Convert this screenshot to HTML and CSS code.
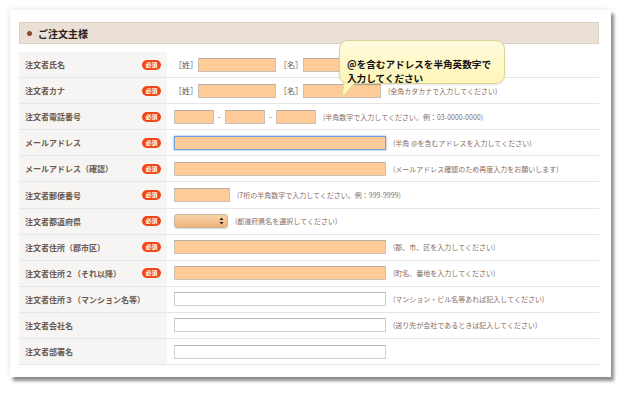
FILE: index.html
```html
<!DOCTYPE html>
<html lang="ja">
<head>
<meta charset="utf-8">
<link rel="stylesheet" href="styles.css">
</head>
<body>
<div class="window">
  <div class="section-head"><span class="dot"></span><span class="title">ご注文主様</span></div>
  <div class="form">
    <div class="row">
      <div class="label"><span>注文者氏名</span><span class="req">必須</span></div>
      <div class="field">
        <span class="br">［姓］</span><input class="in peach w78" type="text">
        <span class="br br2">［名］</span><input class="in peach w78" type="text">
      </div>
    </div>
    <div class="row">
      <div class="label"><span>注文者カナ</span><span class="req">必須</span></div>
      <div class="field">
        <span class="br">［姓］</span><input class="in peach w78" type="text">
        <span class="br br2">［名］</span><input class="in peach w78" type="text">
        <span class="note">(全角カタカナで入力してください)</span>
      </div>
    </div>
    <div class="row">
      <div class="label"><span>注文者電話番号</span><span class="req">必須</span></div>
      <div class="field">
        <input class="in peach w40" type="text"><span class="dash">-</span><input class="in peach w40" type="text"><span class="dash">-</span><input class="in peach w40" type="text">
        <span class="note">(半角数字で入力してください。例：03-0000-0000)</span>
      </div>
    </div>
    <div class="row">
      <div class="label"><span>メールアドレス</span><span class="req">必須</span></div>
      <div class="field">
        <input class="in peach focus wl" type="text">
        <span class="note">(半角 @を含むアドレスを入力してください)</span>
      </div>
    </div>
    <div class="row">
      <div class="label"><span>メールアドレス（確認）</span><span class="req">必須</span></div>
      <div class="field">
        <input class="in peach wl" type="text">
        <span class="note">(メールアドレス確認のため再度入力をお願いします)</span>
      </div>
    </div>
    <div class="row">
      <div class="label"><span>注文者郵便番号</span><span class="req">必須</span></div>
      <div class="field">
        <input class="in peach w56" type="text">
        <span class="note">(7桁の半角数字で入力してください。例：999-9999)</span>
      </div>
    </div>
    <div class="row">
      <div class="label"><span>注文者都道府県</span><span class="req">必須</span></div>
      <div class="field">
        <div class="select"><svg class="arrows" width="5" height="8" viewBox="0 0 5 8"><path d="M2.5 0.5 L4.5 3 L0.5 3 Z M2.5 7.5 L4.5 5 L0.5 5 Z" fill="#222"/></svg></div>
        <span class="note">(都道府県名を選択してください)</span>
      </div>
    </div>
    <div class="row">
      <div class="label"><span>注文者住所（郡市区）</span><span class="req">必須</span></div>
      <div class="field">
        <input class="in peach wl" type="text">
        <span class="note">(郡、市、区を入力してください)</span>
      </div>
    </div>
    <div class="row">
      <div class="label"><span>注文者住所２（それ以降）</span><span class="req">必須</span></div>
      <div class="field">
        <input class="in peach wl" type="text">
        <span class="note">(町名、番地を入力してください)</span>
      </div>
    </div>
    <div class="row">
      <div class="label"><span>注文者住所３（マンション名等）</span></div>
      <div class="field">
        <input class="in white wl" type="text">
        <span class="note">(マンション・ビル名等あれば記入してください)</span>
      </div>
    </div>
    <div class="row">
      <div class="label"><span>注文者会社名</span></div>
      <div class="field">
        <input class="in white wl" type="text">
        <span class="note">(送り先が会社であるときは記入してください)</span>
      </div>
    </div>
    <div class="row">
      <div class="label"><span>注文者部署名</span></div>
      <div class="field">
        <input class="in white wl" type="text">
      </div>
    </div>
  </div>
  <div class="tooltip">
    <div class="tip-text">@を含むアドレスを半角英数字で<br>入力してください</div>
    <svg class="tail" width="18" height="16" viewBox="0 0 18 16"><path d="M4 0 L1.5 14.5 L15 0" fill="#fff7bd" stroke="#d9d39a" stroke-width="1"/><rect x="4.5" y="-1" width="10" height="2" fill="#fff7bd"/></svg>
  </div>
</div>
</body>
</html>
```
FILE: styles.css
```css
* { box-sizing: border-box; }
html, body { margin: 0; padding: 0; background: #ffffff; }
body {
  font-family: "Noto Sans CJK JP", "Noto Sans", sans-serif;
  width: 626px;
  height: 393px;
  overflow: hidden;
}
.window {
  position: relative;
  margin: 10px 0 0 10px;
  width: 601px;
  height: 367px;
  background: #fff;
  padding: 12px 12px 0 9px;
  box-shadow: 3px 4px 3px rgba(0,0,0,0.42), 0 0 6px rgba(0,0,0,0.12);
}
.section-head {
  height: 22px;
  background: #ebe0d5;
  border: 1px solid #ddd0c3;
  display: flex;
  align-items: center;
  padding-left: 7px;
  gap: 6px;
}
.dot {
  width: 5px;
  height: 5px;
  border-radius: 50%;
  background: #8d4a2c;
}
.title {
  font-size: 10px;
  font-weight: 700;
  color: #2a211c;
}
.form {
  margin-top: 8px;
  width: 580px;
}
.row {
  display: grid;
  grid-template-columns: 148px 1fr;
  height: 26.1px;
  border-bottom: 1px solid #e8e6e4;
}
.label {
  background: #f6f5f3;
  display: flex;
  align-items: center;
  justify-content: space-between;
  padding: 0 6px 0 6px;
  font-size: 8px;
  font-weight: 700;
  color: #6b5a4f;
  white-space: nowrap;
}
.req {
  width: 19px;
  height: 10px;
  border-radius: 5px;
  background: #ee4616;
  color: #fff;
  font-size: 6px;
  font-weight: 700;
  display: flex;
  align-items: center;
  justify-content: center;
  line-height: 1;
}
.field {
  display: flex;
  align-items: center;
  padding-left: 7px;
  white-space: nowrap;
}
.br {
  font-size: 8px;
  color: #6b5a4f;
  width: 24px;
}
.br2 { margin-left: 3px; }
.in {
  height: 14px;
  padding: 0;
  margin: 0;
  border: 1px solid #cdbfb3;
  border-top-color: #b9aca1;
  outline: none;
}
.peach { background: #ffcc99; }
.white { background: #fff; border-color: #cfcfcf; border-top-color: #b8b8b8; }
.focus {
  border: 1px solid #6f9fd6;
  box-shadow: 0 0 2px rgba(80,140,210,0.8);
}
.w78 { width: 78px; }
.w40 { width: 40px; }
.w56 { width: 56px; }
.wl { width: 212px; }
.dash {
  font-size: 8px;
  color: #6b5a4f;
  width: 11px;
  text-align: center;
}
.note {
  font-size: 7px;
  color: #8a6b5c;
  margin-left: 7px;
}
.select {
  width: 54px;
  height: 14px;
  border-radius: 3px;
  border: 1px solid #c9b39c;
  background: linear-gradient(#f8d3ab, #f0b27a);
  display: flex;
  align-items: center;
  justify-content: flex-end;
  padding-right: 3px;
  box-shadow: 0 1px 1px rgba(0,0,0,0.15);
}
.arrows { display: block; }
.tooltip {
  position: absolute;
  left: 329px;
  top: 30px;
  width: 166px;
  height: 44px;
  border: 1px solid #d9d39a;
  border-radius: 9px;
  background: linear-gradient(#fffbdc, #fff6b8);
  padding: 16px 0 0 7px;
  box-shadow: 0 1px 2px rgba(0,0,0,0.1);
}
.tip-text {
  font-size: 9.6px;
  font-weight: 700;
  line-height: 14px;
  color: #111;
  white-space: nowrap;
}
.tail {
  position: absolute;
  left: 0px;
  top: 42px;
}
```
